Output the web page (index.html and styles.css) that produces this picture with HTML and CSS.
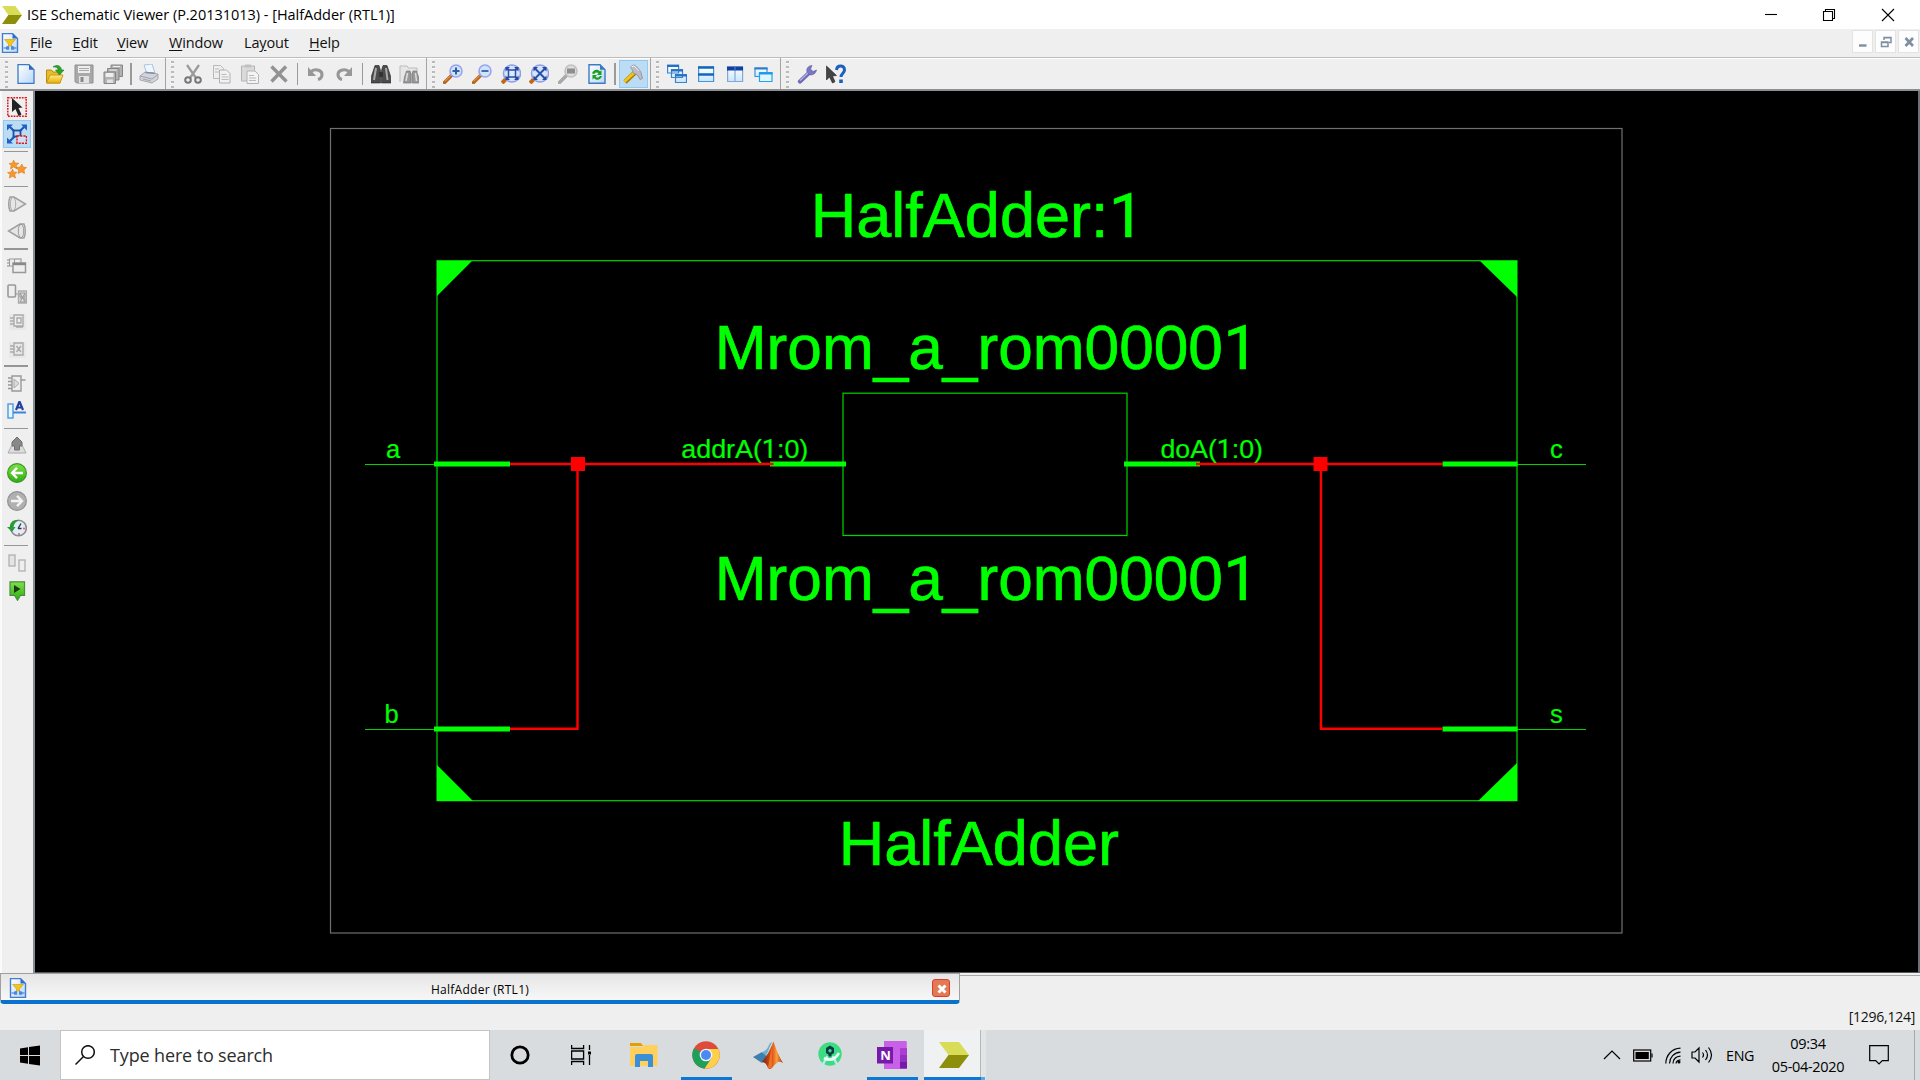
FILE: index.html
```html
<!DOCTYPE html>
<html lang="en">
<head>
<meta charset="utf-8">
<title>ISE Schematic Viewer</title>
<link rel="stylesheet" href="styles.css">
</head>
<body>
<svg class="defs" width="0" height="0">
  <defs>
    <linearGradient id="paper" x1="0" y1="0" x2="1" y2="1"><stop offset="0" stop-color="#fff"/><stop offset="1" stop-color="#b9d6f8"/></linearGradient>
    <linearGradient id="sky" x1="0" y1="0" x2="0" y2="1"><stop offset="0" stop-color="#fff"/><stop offset="1" stop-color="#c5e6ff"/></linearGradient>
    <linearGradient id="gold" x1="0" y1="0" x2="0" y2="1"><stop offset="0" stop-color="#ffe98a"/><stop offset="1" stop-color="#e8b000"/></linearGradient>
    <linearGradient id="leaf" x1="0" y1="0" x2="0" y2="1"><stop offset="0" stop-color="#7fe04a"/><stop offset="1" stop-color="#2fae12"/></linearGradient>
    <linearGradient id="flame" x1="0" y1="0" x2="1" y2="0"><stop offset="0" stop-color="#7a1f10"/><stop offset=".5" stop-color="#e5561b"/><stop offset=".7" stop-color="#f6a23c"/><stop offset="1" stop-color="#b02a14"/></linearGradient>
    <symbol id="doc" viewBox="0 0 20 20"><path d="M2.5.5h10l5 5v14h-15z" fill="url(#paper)" stroke="#3f7fd0" stroke-width="1.4"/><path d="M12.500 .5v5h5z" fill="#2f6cc8"/><path d="M4.500 6.500h11l-4 4.500v2h-3v-2z" fill="#f5c518" stroke="#c89a10" stroke-width=".6"/><path d="M3.500 15h3M13.500 15h3M8 13v2M12 13v2" stroke="#3a6fd0" stroke-width="1.200"/><rect x="6" y="13.500" width="3.200" height="3.200" fill="#4a86e0"/><rect x="11" y="13.500" width="3.200" height="3.200" fill="#4a86e0"/></symbol>
    <symbol id="xil" viewBox="0 0 30 26"><path d="M0 0h20l10 13H9.500z" fill="#d9dc57"/><path d="M9.500 13H30L20 26H0z" fill="#8d8e0a"/></symbol>
    <symbol id="lens" viewBox="0 0 20 20"><path d="M1.500 18.500l7-7" stroke="#b5651d" stroke-width="3.400" stroke-linecap="round"/><path d="M2 17.300l6-6" stroke="#f0a850" stroke-width="1"/><circle cx="13" cy="7" r="6" fill="#cfe4fb" stroke="#9ba3ee" stroke-width="1.600"/></symbol>
    <symbol id="fit" viewBox="0 0 20 20"><circle cx="11" cy="9.500" r="8.500" fill="#d3e4fb" stroke="#8f9bea" stroke-width="1.500"/><path d="M1 19l3.500-3.500" stroke="#c06a18" stroke-width="4"/><path d="M5.500 4l11 11M16.500 4l-11 11" stroke="#2b4fa8" stroke-width="2"/><path d="M4.500 3h4.500l-4.500 4.500zM17.500 3v4.500L13 3zM17.500 16H13l4.500-4.500zM4.500 16v-4.500L9 16z" fill="#244a9e"/></symbol>
  </defs>
</svg>

<header class="titlebar">
  <svg class="app-logo" viewBox="0 0 30 26" preserveAspectRatio="none"><use href="#xil"/></svg>
  <h1 class="app-title">ISE Schematic Viewer (P.20131013) - [HalfAdder (RTL1)]</h1>
  <div class="window-controls">
    <svg viewBox="0 0 14 14"><path d="M1 6.500h12"/></svg>
    <svg viewBox="0 0 14 14"><path d="M1.500 3.500h9v9h-9zM3.500 3.500v-2h9v9h-2"/></svg>
    <svg viewBox="0 0 14 14"><path d="M1 1l12 12M13 1L1 13"/></svg>
  </div>
</header>

<nav class="menubar">
  <svg class="doc-icon" viewBox="0 0 20 20"><use href="#doc"/></svg>
  <span class="menu m-file"><u>F</u>ile</span><span class="menu m-edit"><u>E</u>dit</span><span class="menu m-view"><u>V</u>iew</span><span class="menu m-window"><u>W</u>indow</span><span class="menu m-layout">La<u>y</u>out</span><span class="menu m-help"><u>H</u>elp</span>
  <div class="mdi-controls">
    <span><svg viewBox="0 0 12 12"><path d="M2 9.500h7.500" stroke-width="2.400"/></svg></span>
    <span><svg viewBox="0 0 12 12"><path d="M4 4V1.500h7V6.500H9M1.500 6h6.500v4.500H1.500zM1.500 6.500h6.500M4 1.800h7" stroke-width="1.500"/></svg></span>
    <span><svg viewBox="0 0 12 12"><path d="M2.500 2l7.500 8M10 2l-7.500 8" stroke-width="2.600"/></svg></span>
  </div>
</nav>

<div class="toolbar">
  <div class="group"><i class="grip"></i>
    <b class="tool"><svg viewBox="0 0 20 20"><path d="M2 .7h11l5 5v13.600H2z" fill="url(#paper)" stroke="#3c7ac6" stroke-width="1.300"/><path d="M13 .7v5h5z" fill="#2d68b8"/></svg></b>
    <b class="tool"><svg viewBox="0 0 20 20"><path d="M1.500 19V6h5l1.500 2h7v11z" fill="#e7bd2a" stroke="#b98a12"/><path d="M1.500 19L5 11h13l-3 8z" fill="url(#gold)" stroke="#c79a18"/><path d="M8 3c4-3 8-1.500 8.500 3H19l-4.500 5L10.500 6h2.700C12.800 3.500 11 2.500 8 3z" fill="#2ea32a" stroke="#1c7d1a" stroke-width=".6"/></svg></b>
    <b class="tool"><svg viewBox="0 0 20 20"><path d="M1 1h18v18H2.500L1 17.500z" fill="#a9a9a9" stroke="#8f8f8f"/><rect x="4" y="2" width="12" height="7" fill="#eee"/><path d="M5 4.500h10M5 6.500h10" stroke="#aaa"/><rect x="5" y="12" width="10" height="7" fill="#e3e3e3"/><rect x="6.500" y="13" width="3" height="5" fill="#8a8a8a"/></svg></b>
    <b class="tool"><svg viewBox="0 0 20 20"><g fill="#b2b2b2" stroke="#858585"><path d="M8 1h11.500v11.500H8z"/><path d="M4.500 4.500H16V16H4.500z"/><path d="M1 8h11.500v11.500H1z"/></g><path d="M10 2.500h7M6.500 6h7M3 9.500h7v3H3z" fill="#eee" stroke="#eee"/><path d="M4 15.500h6v3.500H4z" fill="#e2e2e2"/></svg></b>
    <i class="sep"></i>
    <b class="tool"><svg viewBox="0 0 20 20"><path d="M5 1l8-1 3 9-8 1z" fill="#f0f6ff" stroke="#abc2dd"/><path d="M1 12l5-4 13 2v5l-6 4-12-3z" fill="#d4d4d8" stroke="#a8a8ae"/><path d="M1 12l12 3 6-4.500M4 15l8 2" fill="none" stroke="#9ba3b5"/><path d="M6.500 8.500l9 .8" stroke="#7d8aa8" stroke-width="1.500"/></svg></b>
  </div>
  <div class="group"><i class="grip"></i>
    <b class="tool"><svg viewBox="0 0 20 20"><path d="M4 1l9 13M16 1L7 14" stroke="#9a9a9a" stroke-width="2.200"/><circle cx="5" cy="16" r="2.800" fill="none" stroke="#777" stroke-width="2"/><circle cx="15" cy="16" r="2.800" fill="none" stroke="#777" stroke-width="2"/></svg></b>
    <b class="tool"><svg viewBox="0 0 20 20"><path d="M1.500 1.500h7l3 3v10h-10z" fill="#eee" stroke="#b8b8b8"/><path d="M7.500 6h7l3.500 3.500V19H7.500z" fill="#f1f1f1" stroke="#b0b0b0"/><path d="M3 5h4M3 8h4M9.500 10.500h5M9.500 13h7M9.500 15.500h7" stroke="#bbb"/></svg></b>
    <b class="tool"><svg viewBox="0 0 20 20"><path d="M1.500 2h13v15h-13z" fill="#dadada" stroke="#b4b4b4"/><path d="M5 .5h6v3H5z" fill="#c0c0c0"/><path d="M7 7h8l3.500 3.500V19.500H7z" fill="#f3f3f3" stroke="#b4b4b4"/><path d="M9 11.500h5M9 14h7M9 16.500h7" stroke="#bbb"/></svg></b>
    <b class="tool"><svg viewBox="0 0 20 20"><path d="M2.500 2.500l15 15M17 2.500L2.500 17.500" stroke="#929292" stroke-width="3.400"/></svg></b>
    <i class="sep"></i>
    <b class="tool"><svg viewBox="0 0 20 20"><path d="M5 7.500c5-3.500 11.500-1 11 3.500-.2 2-1.800 4-4 4.500" fill="none" stroke="#979797" stroke-width="3"/><path d="M2 3v9h8z" fill="#979797"/></svg></b>
    <b class="tool"><svg viewBox="0 0 20 20"><path d="M15 7.500C10 4 3.500 6.500 4 11c.2 2 1.800 4 4 4.500" fill="none" stroke="#979797" stroke-width="3"/><path d="M18 3v9h-8z" fill="#979797"/></svg></b>
    <i class="sep"></i>
    <b class="tool"><svg viewBox="0 0 20 20"><path d="M4 1.500h4l1.500 5v12.500H0l.5-7zM12 1.500h4l3.500 10.500.5 7h-9.500V6.500z" fill="#4c4c4c" stroke="#222" stroke-width=".6"/><path d="M8 8h4v5H8z" fill="#333"/><path d="M5 4L3 16M15 4l1.500 12" stroke="#aaa" stroke-width="2"/></svg></b>
    <b class="tool"><svg viewBox="0 0 20 20"><path d="M1 18V2h7l1.500 2H18v4" fill="#e6e6e6" stroke="#bbb"/><path d="M7.500 7H11l1 3v9H4.500l1-6zM14 7h3.500l2 6 .5 6h-7v-9z" fill="#999" stroke="#777" stroke-width=".7"/><path d="M8.500 9l-1.500 8M16.500 9l1 8" stroke="#ddd" stroke-width="1.500"/></svg></b>
  </div>
  <div class="group"><i class="grip"></i>
    <b class="tool"><svg viewBox="0 0 20 20"><use href="#lens"/><path d="M9.500 7h7M13 3.500v7" stroke="#2c5f9f" stroke-width="2"/></svg></b>
    <b class="tool"><svg viewBox="0 0 20 20"><use href="#lens"/><path d="M9.500 7h7" stroke="#3a6fb0" stroke-width="2"/></svg></b>
    <b class="tool"><svg viewBox="0 0 20 20"><use href="#fit"/><rect x="7.500" y="6" width="7" height="7" fill="#dcebfd" stroke="#2b4fa8" stroke-width="1.500"/></svg></b>
    <b class="tool"><svg viewBox="0 0 20 20"><use href="#fit"/></svg></b>
    <b class="tool"><svg viewBox="0 0 20 20"><path d="M1.500 18.500l7-7" stroke="#a8a8a8" stroke-width="3.400" stroke-linecap="round"/><circle cx="13" cy="7" r="6" fill="#ddd" stroke="#c0c0c0" stroke-width="1.600"/><rect x="9" y="4.500" width="8" height="5" fill="#8e8e8e"/></svg></b>
    <b class="tool"><svg viewBox="0 0 20 20"><path d="M2 .7h11l5 5v13.600H2z" fill="url(#paper)" stroke="#3c7ac6" stroke-width="1.400"/><path d="M13 .7v5h5z" fill="#3d78c4"/><path d="M5 9.500c1-4 6-5 8-2l1.500-1.500V11H10l1.500-1.700c-1.500-1.500-3.500-1-4.200.7zM15 12c-1 4-6 5-8 2l-1.500 1.700V11H10l-1.500 1.700c1.500 1.500 3.500 1 4.200-.7z" fill="#18a01c"/></svg></b>
    <i class="sep"></i>
    <b class="tool active"><svg viewBox="0 0 20 20"><path d="M2 18L12 8.500" stroke="#a97b08" stroke-width="4.600"/><path d="M1.500 17.500L12 8" stroke="#f0c419" stroke-width="3"/><path d="M7.500 3L11 .8l4.500 3.700 2.500 4 1.500 6-2.500 1-2.500-4.500-4-2-1.500-3.500z" fill="#bcbcc6" stroke="#8c8c98" stroke-width=".8"/><path d="M8.500 3l2.500-1.200 5 5" stroke="#f4f4f4" fill="none"/></svg></b>
  </div>
  <div class="group"><i class="grip"></i>
    <b class="tool"><svg viewBox="0 0 20 20"><g fill="url(#sky)" stroke="#3f83cc" stroke-width="1.200"><path d="M.6 1h11v8H.6zM4.500 5.500h11v8h-11zM8.500 10.500h11v8h-11z"/></g><path d="M0 2h12M4 6.500h12M8 11.500h12" stroke="#2470c4" stroke-width="2"/></svg></b>
    <b class="tool"><svg viewBox="0 0 20 20"><path d="M2.600 3h15v14.500h-15z" fill="url(#sky)" stroke="#4a94d4" stroke-width="1.200"/><path d="M2 3.500h16M2 10.500h16" stroke="#1665bd" stroke-width="2.400"/></svg></b>
    <b class="tool"><svg viewBox="0 0 20 20"><path d="M2.600 3h15v14.500h-15zM10 3v14" fill="url(#sky)" stroke="#86a8cc" stroke-width="1.200"/><path d="M2 4.500h16" stroke="#0f3fa5" stroke-width="4"/><path d="M10 3v4" stroke="#5a85d0"/></svg></b>
    <b class="tool"><svg viewBox="0 0 20 20"><path d="M2 4h12v8.500H2z" fill="url(#sky)" stroke="#3f8fd8" stroke-width="1.200"/><path d="M1.500 4.500h13" stroke="#2a7ac8" stroke-width="2"/><path d="M6.500 8.500h12.500v9H6.500z" fill="#e2f6ff" stroke="#20a4ee" stroke-width="1.200"/><path d="M6 9.500H19.500" stroke="#1a9ae8" stroke-width="2"/></svg></b>
  </div>
  <div class="group last"><i class="grip"></i>
    <b class="tool"><svg viewBox="0 0 20 20"><path d="M3 17.500L13 8" stroke="#6f6bb8" stroke-width="4.200" stroke-linecap="round"/><path d="M15 1.500c-4 0-6.500 4-4.500 7.500 2.500 3.500 8 2 9-3l-3.500 1.500-2.500-2.500z" fill="#7a76c2" stroke="#5a569f" stroke-width=".6"/><path d="M3 16.500l8-7.500" stroke="#b5b3e5" stroke-width="1.200"/></svg></b>
    <b class="tool"><svg viewBox="0 0 20 20"><path d="M.5 2v14l3-3 3 6 2.500-1.300L6.500 12l4-.5z" fill="#444" stroke="#222" stroke-width=".6"/><path d="M10.500 6c.5-5.500 8-5.500 8 0 0 3-3.500 3.500-3.500 7" fill="none" stroke="#1d5fbf" stroke-width="3"/><rect x="13.200" y="15.500" width="3.600" height="3.500" fill="#1d5fbf"/></svg></b>
  </div>
</div>

<main class="workspace">
  <aside class="sidebar">
    <b class="tool"><svg viewBox="0 0 20 20"><rect x=".8" y=".8" width="18.400" height="18.400" fill="none" stroke="#e0141e" stroke-width="1.500" stroke-dasharray="1.800 1"/><path d="M5 1v14l3.500-3 3 7 3-1.500-3-6.500 4-.5z" fill="#222"/></svg></b>
    <b class="tool active"><svg viewBox="0 0 20 20"><path d="M2 2l16 16M18 2L2 18" stroke="#1e5bb5" stroke-width="2.200"/><path d="M0 .5h6L0 6.500zM20 .5v6l-6-6zM0 19.500v-6l6 6z" fill="#1f63c4"/><rect x="6.500" y="6.500" width="7" height="6" fill="#b8d8f6" stroke="#1a4fa5" stroke-width="1.800"/><rect x="10" y="12" width="9.500" height="7.200" fill="#cfe0f5" stroke="#e0141e" stroke-width="1.500" stroke-dasharray="2.200 1"/></svg></b>
    <i class="sep"></i>
    <b class="tool"><svg viewBox="0 0 20 20"><g fill="#f49a2c" stroke="#e07a20" stroke-width=".6"><path d="M6.500 1l1.700 3 3.800.2-2.800 2.300 1 3.500-3.700-2-3 2 .7-3.700L2 4.500l3.500-.4z"/><path d="M15 5l1 3 3.500.5L17 11l.5 3.500L14.500 13l-3.500 1.500.5-3.500L9 8.500l4-.5z"/><path d="M5.500 10l1.300 3 3.200.3-2.300 2.200.8 3.500-3-1.700L2.300 19l.7-3.500L.5 13.500l3.700-.5z"/></g></svg></b>
    <i class="sep"></i>
    <b class="tool"><svg viewBox="0 0 20 20"><path d="M3 3h4l11.500 7L7 17H3c-1.500-4-1.500-10 0-14z" fill="#e6e6e6" stroke="#a0a0a0" stroke-width="1.500"/><ellipse cx="6" cy="10" rx="2.700" ry="6.700" fill="none" stroke="#aaa"/></svg></b>
    <b class="tool"><svg viewBox="0 0 20 20"><path d="M17 3h-4L1.500 10 13 17h4c1.500-4 1.500-10 0-14z" fill="#e6e6e6" stroke="#a0a0a0" stroke-width="1.500"/><ellipse cx="14" cy="10" rx="2.700" ry="6.700" fill="none" stroke="#999"/></svg></b>
    <i class="sep"></i>
    <b class="tool"><svg viewBox="0 0 20 20"><rect x="2.500" y="3" width="5" height="7" fill="#eee" stroke="#999"/><path d="M0 4h2M0 7h2M0 10h2M8 3h6v4" fill="none" stroke="#aaa" stroke-width="1.400"/><rect x="6" y="7" width="12.500" height="9.500" fill="#eee" stroke="#999" stroke-width="1.500"/><path d="M6 8h12.500" stroke="#888" stroke-width="2.400"/></svg></b>
    <b class="tool"><svg viewBox="0 0 20 20"><rect x="1" y="1" width="7.500" height="12" rx="1" fill="#eee" stroke="#999" stroke-width="1.600"/><path d="M8.500 10h3" stroke="#999"/><rect x="11.500" y="7" width="8" height="12" fill="#ddd" stroke="#aaa" stroke-width="1.400"/><path d="M13 9h5v4h-5zM13 14h5v4h-5M13 9l5 9M18 9l-5 9" fill="none" stroke="#999"/></svg></b>
    <b class="tool"><svg viewBox="0 0 20 20"><path d="M2 3h17v16H2z" fill="#e8e8e8"/><path d="M7 4h9v11H7zM3 7h4M3 10h4M3 13h4M16 16H9M10 7h4v5h-4z" fill="#eee" stroke="#aaa" stroke-width="1.400"/></svg></b>
    <b class="tool"><svg viewBox="0 0 20 20"><path d="M2 3h17v16H2z" fill="#e8e8e8"/><path d="M7 4h9v12H7zM3 7h4M3 10h4M3 13h4M9.500 7l4.500 6M14 7l-4.500 6" fill="none" stroke="#aaa" stroke-width="1.400"/></svg></b>
    <i class="sep"></i>
    <b class="tool"><svg viewBox="0 0 20 20"><path d="M5 2h9v15H5zM1 4h4M1 7.500h4M1 11h4M1 14.500h4M14 6h4.500" fill="#eee" stroke="#999" stroke-width="1.400"/><path d="M7 5v9l5-4.500z" fill="#ddd" stroke="#aaa"/></svg></b>
    <b class="tool"><svg viewBox="0 0 20 20"><rect x="1" y="3" width="5" height="14" fill="#e8f6ff" stroke="#4b9be0" stroke-width="1.400"/><path d="M6 11.500h13" stroke="#3a86dc" stroke-width="2"/><path d="M9 9l3.500-8.500L16 9M10.500 6.500h4" fill="none" stroke="#25419b" stroke-width="2.200"/></svg></b>
    <i class="sep"></i>
    <b class="tool"><svg viewBox="0 0 20 20"><path d="M5 9l-4 8h18l-4-8z" fill="#ddd" stroke="#aaa"/><path d="M10 1l5 5v4h-2.500v4h-5v-4H5V6z" fill="#888" stroke="#707070"/></svg></b>
    <b class="tool"><svg viewBox="0 0 20 20"><circle cx="10" cy="10" r="9.400" fill="url(#leaf)" stroke="#3a9a28" stroke-width="1.200"/><path d="M16 10H5.500M10 4.800L5 10l5 5.200" fill="none" stroke="#fff" stroke-width="2.400"/></svg></b>
    <b class="tool"><svg viewBox="0 0 20 20"><circle cx="10" cy="10" r="9.400" fill="#b0b0b0" stroke="#929292" stroke-width="1.200"/><path d="M4 10h10.500M10 4.800l5 5.200-5 5.200" fill="none" stroke="#f3f3f3" stroke-width="2.400"/></svg></b>
    <b class="tool"><svg viewBox="0 0 20 20"><circle cx="11.500" cy="10" r="7.800" fill="#dceefc" stroke="#8b8b8b" stroke-width="1.600"/><path d="M11 10.500l3-5M11 10.500h3.500" stroke="#333" stroke-width="1.300"/><circle cx="12" cy="16" r="1" fill="#e54"/><circle cx="17" cy="10.500" r="1" fill="#e54"/><path d="M0 9l5 5 3.500-5H6.500C7 6 8.500 3.500 12 2.500 7 1 3 4 2.800 9z" fill="#2d9a35"/></svg></b>
    <i class="sep"></i>
    <b class="tool"><svg viewBox="0 0 20 20"><rect x="2" y="2" width="6" height="11" fill="#e4e4e4" stroke="#b0b0b0" stroke-width="1.300"/><rect x="12" y="7" width="6" height="11" fill="#eee" stroke="#b0b0b0" stroke-width="1.300"/></svg></b>
    <b class="tool"><svg viewBox="0 0 20 20"><path d="M3 .8h14.500v13.500h-4l-3 5-3-5H3z" fill="url(#leaf)" stroke="#46903a" stroke-width="1.200"/><path d="M7 4v8l6.500-4z" fill="#1c3a14"/></svg></b>
  </aside>

  <section class="canvas">
    <svg class="schematic" viewBox="35 91 1883 881">
      <rect class="sheet" x="330.500" y="128.500" width="1291.500" height="804.500"/>
      <g class="outline">
        <rect x="437" y="260.700" width="1080" height="540"/>
        <rect x="843" y="393.200" width="284" height="142.300"/>
        <path d="M365 464.500h70M1517 464.500h69M365 729.500h70M1517 729.500h69"/>
      </g>
      <path class="corner" d="M437 261h35l-35 35zM1517 261h-37l37 36zM437 801v-36l36 36zM1517 801v-38l-39 38z"/>
      <path class="pin" d="M434 464h76M770 464h76M1124 464h76M1442.500 464h75M434 729h76M1442.500 729h75"/>
      <path class="wire" d="M510 464h263.500M1196 464h246.500M577.500 464v264.800H510M1321 464v264.800h121.500"/>
      <path class="joint" d="M571 457h14v14h-14zM1313.500 457h14v14h-14z"/>
      <g class="label">
        <text x="810.800" y="236.500">HalfAdder:</text>
        <text class="one" x="1109" y="236.500">1</text>
        <text class="rom" x="714.800" y="369">Mrom_a_rom0000</text>
        <text class="one" x="1223.500" y="369">1</text>
        <text class="rom" x="714.800" y="600">Mrom_a_rom0000</text>
        <text class="one" x="1223.500" y="600">1</text>
        <text x="838.800" y="865">HalfAdder</text>
      </g>
      <g class="port">
        <text x="386" y="457.500">a</text>
        <text x="384.500" y="722.500">b</text>
        <text x="1550" y="457.500">c</text>
        <text x="1550" y="722.500">s</text>
        <text x="681.300" y="457.500" textLength="127" lengthAdjust="spacingAndGlyphs">addrA(<tspan class="one">1</tspan>:0)</text>
        <text x="1160.500" y="457.500" textLength="102.500" lengthAdjust="spacingAndGlyphs">doA(<tspan class="one">1</tspan>:0)</text>
      </g>
    </svg>
  </section>
</main>

<div class="tabbar">
  <div class="tab">
    <svg class="tab-icon" viewBox="0 0 20 20"><use href="#doc"/></svg>
    <span class="tab-name">HalfAdder (RTL1)</span>
    <span class="tab-close"><svg viewBox="0 0 18 18"><path d="M5.500 5.500l7 7M12.500 5.500l-7 7"/></svg></span>
  </div>
  <div class="tab-rest"></div>
</div>
<div class="statusbar"><span class="coords">[1296,124]</span></div>

<footer class="taskbar">
  <div class="start"><svg viewBox="0 0 20 20"><path d="M0 3l8-1.200v7.700H0zM9 1.600L20 0v9.500H9zM0 10.500h8v7.800L0 17zM9 10.500h11V20L9 18.400z"/></svg></div>
  <div class="search">
    <svg viewBox="0 0 20 20"><circle cx="13" cy="7" r="6.300"/><path d="M8.500 11.500L.5 19.500"/></svg>
    <span class="search-text">Type here to search</span>
  </div>
  <div class="apps">
    <div class="app w62"><svg class="i20" viewBox="0 0 20 20"><circle cx="10" cy="10" r="8.200" fill="none" stroke="#000" stroke-width="2.800"/></svg></div>
    <div class="app w62 views"><svg class="i20" viewBox="0 0 20 20"><path d="M.6 0v3.500h12V0M.6 20v-3.500h12V20M.6 6h12v8H.6zM18.500 0v5M18.500 10v10" fill="none" stroke="#000" stroke-width="1.300"/><rect x="17" y="6.500" width="3" height="3"/></svg></div>
    <div class="app w62"><svg class="i28" viewBox="0 0 28 26"><path d="M0 1h11l2 3H0z" fill="#e0a000"/><path d="M0 5h12l2-2h13.500v21H0z" fill="#ffd05c"/><path d="M5 25V14q0-2 2-2h14q2 0 2 2v11h-5v-6h-8v6z" fill="#3b8fd8"/></svg></div>
    <div class="app w62 running"><svg class="i28" viewBox="0 0 28 28"><circle cx="14" cy="14" r="13.700" fill="#de4b3d"/><path d="M14 14L2.200 7A13.700 13.700 0 0 0 12.600 27.600L20 17z" fill="#1fa05a"/><path d="M14 8h12.300A13.700 13.700 0 0 1 12.600 27.600L19.500 17z" fill="#fcd04a"/><circle cx="14" cy="14" r="6.300" fill="#f4f4f4"/><circle cx="14" cy="14" r="5" fill="#4a8af4"/></svg></div>
    <div class="app w62"><svg class="i30" viewBox="0 0 30 28"><path d="M0 16l9-5 5 4-5 7z" fill="#3f7fb0"/><path d="M9 11q4-1 6-5 2-5 4-5l-6 14z" fill="#6db0d0"/><path d="M9 21l5-7Q17 9 20.500.5 25 14 30 22q-3-2-5-1-3 2-6 6-2 2-4 0-2-6-6-6z" fill="url(#flame)"/><path d="M20.500.5q-2 10-1.500 26-2 1-4 0 2-14 5.500-26z" fill="#e8742a"/></svg></div>
    <div class="app w62"><svg class="i26" viewBox="0 0 26 26"><circle cx="13" cy="12" r="11.700" fill="#3ddc84"/><path d="M10.500 14L4.500 25M15.500 14l6 11" stroke="#c0e8f0" stroke-width="2.400"/><path d="M7 16q9 5 15-5" fill="none" stroke="#e8fff5" stroke-width="2.600"/><path d="M13 3.500l4 2.500v5l-2.500 1.500v2h-3v-2L9 11V6z" fill="#0c3b48"/><circle cx="13" cy="8.700" r="1.700" fill="#3ddc84"/></svg></div>
    <div class="app w62 running"><svg class="i30" viewBox="0 0 30 28"><path d="M7 0h22q.8 0 .8 1v26q0 1-.8 1H7z" fill="#c861e8"/><path d="M23 7h7v7h-7z" fill="#a83fd0"/><path d="M23 14h7v7h-7z" fill="#9230c0"/><path d="M23 21h7v6.500h-7z" fill="#7719aa"/><rect x="0" y="6" width="16" height="16.500" fill="#7719aa"/><text x="3.200" y="18.500" class="onenote-n">N</text></svg></div>
    <div class="app current"><svg class="i30" viewBox="0 0 30 26"><use href="#xil"/></svg></div>
  </div>
  <div class="tray">
    <svg class="chevron" viewBox="0 0 18 12"><path d="M1 10l8-8 8 8"/></svg>
    <svg class="battery" viewBox="0 0 20 13"><rect x=".7" y="1" width="17" height="11"/><rect x="2.500" y="3" width="13.300" height="7" class="solid"/><path d="M19 4.500v4"/></svg>
    <svg class="wifi" viewBox="0 0 17 17"><path d="M.8 16.500C1 8 7 1.500 15.500 1.200M4.500 16.500C4.700 10.500 9 5.500 15.500 5.200M8 16.500c.2-4 3-7 7.500-7.300M11 16.500c.2-2 2-3.500 4.500-3.700"/><circle cx="14" cy="15" r="1.500" class="solid"/></svg>
    <svg class="speaker" viewBox="0 0 22 18"><path d="M1 6h3l4-4v14l-4-4H1zM11.500 6.500q2 2.500 0 5M14.500 4q4 5 0 10M17.500 1.500q6 7.500 0 15"/></svg>
    <span class="lang">ENG</span>
    <div class="clock"><span>09:34</span><span>05-04-2020</span></div>
    <svg class="notice" viewBox="0 0 20 20"><path d="M.7.700h18.600v15h-6L10 19l-3.300-3.300h-6z"/></svg>
    <i class="peek"></i>
  </div>
</footer>
</body>
</html>
```
FILE: styles.css
```css
* { box-sizing: border-box; }
body { margin: 0; width: 1920px; height: 1080px; overflow: hidden; display: flex; flex-direction: column; background: #efefef; color: #111; font-family: "Open Sans", "Noto Sans", sans-serif; font-size: 15px; }
svg { display: block; flex: none; }
.defs { position: absolute; }
i, b { font: inherit; display: block; flex: none; }

.titlebar { height: 29px; background: #fff; display: flex; align-items: center; flex: none; }
.app-logo { width: 20px; height: 18px; margin-left: 2px; }
.app-title { margin: 0 auto 0 5px; font-size: 14.500px; font-weight: 400; letter-spacing: -.02px; line-height: 28px; white-space: nowrap; color: #000; }
.window-controls { display: flex; gap: 44.500px; padding-right: 25px; }
.window-controls svg { width: 14px; height: 14px; fill: none; stroke: #000; stroke-width: 1.100; }
.window-controls svg:nth-child(2) { margin: 0 1px 0 -1px; }

.menubar { height: 28px; display: flex; align-items: center; flex: none; }
.doc-icon { width: 20px; height: 20px; margin-right: 10px; }
.menu { font-size: 14.500px; letter-spacing: -.15px; line-height: 26px; white-space: nowrap; }
.menu u { text-underline-offset: 2px; }
.m-file { width: 42.500px; }
.m-edit { width: 44.500px; }
.m-view { width: 52px; }
.m-window { width: 75px; }
.m-layout { width: 65px; }
.mdi-controls { margin-left: auto; display: flex; gap: 2px; padding-right: 1px; align-self: flex-start; padding-top: 1px; }
.mdi-controls span { width: 21px; height: 23px; background: #fdfdfd; border: 1px solid #e3e3e3; display: grid; place-items: center; }
.mdi-controls svg { width: 12px; height: 12px; fill: none; stroke: #7d8fa1; }

.toolbar { height: 34px; border-top: 1px solid #bcbcbc; border-bottom: 2px solid #8c8f94; display: flex; flex: none; box-shadow: inset 0 1px #fff; }
.group { display: flex; align-items: center; padding: 1px 2px 0 0; border-right: 1.500px solid #a3a3a3; }
.group.last { border: 0; }
.grip { width: 3px; height: 27px; margin: 0 4px 0 5px; background: repeating-linear-gradient(#b9b9b9 0 2px, #f6f6f6 2px 3px, transparent 3px 5px); }
.tool { width: 28.750px; height: 27.400px; display: grid; place-items: center; }
.tool svg { width: 20px; height: 20px; }
.tool.active { background: #bcdcf4; border: 1px solid #90c8f6; }
.group .sep { width: 1.500px; height: 22px; margin: 0 3.100px; background: #9a9a9a; }

.workspace { display: flex; height: 882px; flex: none; }
.sidebar { width: 35px; padding: 2px 3px 0 2.500px; border-right: 2px solid #858b90; box-shadow: inset 2px 0 #fafafa; display: flex; flex-direction: column; flex: none; }
.sidebar .sep { width: 24px; height: 1.500px; margin: 3.050px auto; background: #969696; }
.canvas { flex: 1; background: #000; border-right: 2px solid #6e7175; border-bottom: 1px solid #55595c; }
.schematic { width: 1883px; height: 881px; }
.sheet { fill: none; stroke: #707070; stroke-width: 1.200; }
.outline { fill: none; stroke: #00d400; stroke-width: 1.200; }
.corner, .joint { fill: #0f0; }
.pin { stroke: #0f0; stroke-width: 5; }
.wire { fill: none; stroke: #f00; stroke-width: 2.400; }
.joint { fill: #f00; }
.label, .port { fill: #0f0; font-family: "Liberation Sans", Arial, sans-serif; }
.label { font-size: 63px; stroke: #0f0; stroke-width: .7; }
.label .rom { font-size: 62.200px; }
.label .one { font-size: 62px; }
.port { font-size: 25.500px; stroke: #0f0; stroke-width: .2; }
.one { font-family: Roboto, sans-serif; }

.tabbar { height: 31px; display: flex; flex: none; }
.tab { width: 960px; display: flex; align-items: center; padding: 1px 9px 0 7px; border: 1px solid #a0a0a0; border-bottom: 4px solid #0a72cc; border-radius: 0 0 4px 4px; background: linear-gradient(#e6e6e6, #f7f7f7); }
.tab-icon { width: 20px; height: 20px; }
.tab-name { flex: 1; text-align: center; font-size: 12px; letter-spacing: .27px; padding: 3px 0 0; color: #000; }
.tab-close { width: 18px; height: 18px; margin-top: 1px; background: #e37a55; border: 1.500px solid #d8402c; border-radius: 3px; display: grid; place-items: center; }
.tab-close svg { width: 18px; height: 18px; stroke: #fff; stroke-width: 3; }
.tab-rest { flex: 1; margin-top: 2px; border-top: 1px solid #a8a8a8; }
.statusbar { height: 26px; flex: none; display: flex; justify-content: flex-end; padding-right: 5px; }
.coords { font-size: 14px; line-height: 25px; letter-spacing: -.25px; }

.taskbar { height: 50px; display: flex; background: #d8dcde; flex: none; }
.start { width: 60px; display: grid; place-items: center; }
.start svg { width: 20px; height: 21px; }
.search { width: 430px; height: 50px; background: #fff; border: 1px solid #c4c4c4; display: flex; align-items: center; padding-left: 14px; gap: 15px; }
.search svg { width: 20px; height: 20px; fill: none; stroke: #111; stroke-width: 1.500; }
.search-text { font-size: 18px; letter-spacing: -.14px; color: #2d2d2d; white-space: nowrap; line-height: 46px; }
.apps { display: flex; margin-left: -1px; }
.app { display: grid; place-items: center; height: 50px; border-bottom: 3px solid transparent; padding-top: 3px; }
.w62 { width: 62px; }
.views { padding-right: 3px; }
.running { border-bottom: 0; background: linear-gradient(#0a78d7, #0a78d7) center bottom / 51px 3px no-repeat; padding-top: 0; }
.current { width: 62px; margin-left: 1px; padding: 0 3px 0 0; border: 0; background: linear-gradient(#0a78d7, #0a78d7) left bottom / 57px 3px no-repeat, linear-gradient(#5aa5e4, #5aa5e4) 57px bottom / 4px 3px no-repeat, linear-gradient(90deg, #eff1f2 56px, #b4b9bc 56px 57px, #e2e5e6 57px); }
.i20 { width: 20px; height: 20px; }
.i26 { width: 26px; height: 26px; }
.i28 { width: 28px; height: 28px; }
.i30 { width: 30px; height: 28px; }
.onenote-n { font: bold 13px "Open Sans", sans-serif; fill: #fff; stroke: none; }
.tray { margin-left: auto; display: flex; align-items: center; }
.tray svg { fill: none; stroke: #000; stroke-width: 1.200; }
.tray .solid { fill: #000; stroke: none; }
.chevron { width: 18px; height: 12px; margin-right: 12px; }
.battery { width: 20px; height: 13px; margin-right: 12px; }
.wifi { width: 17px; height: 17px; margin-right: 10px; }
.speaker { width: 22px; height: 18px; margin: 0 13px 0 -1px; }
.lang { font-size: 14.300px; width: 30px; letter-spacing: -.3px; color: #000; }
.clock { width: 104px; display: flex; flex-direction: column; text-align: center; font-size: 14.500px; line-height: 23px; letter-spacing: -.3px; color: #000; }
.notice { width: 20px; height: 20px; margin: 0 25px 0 9px; }
.peek { width: 1px; height: 50px; background: #a5aaad; margin-right: 5px; }
```
